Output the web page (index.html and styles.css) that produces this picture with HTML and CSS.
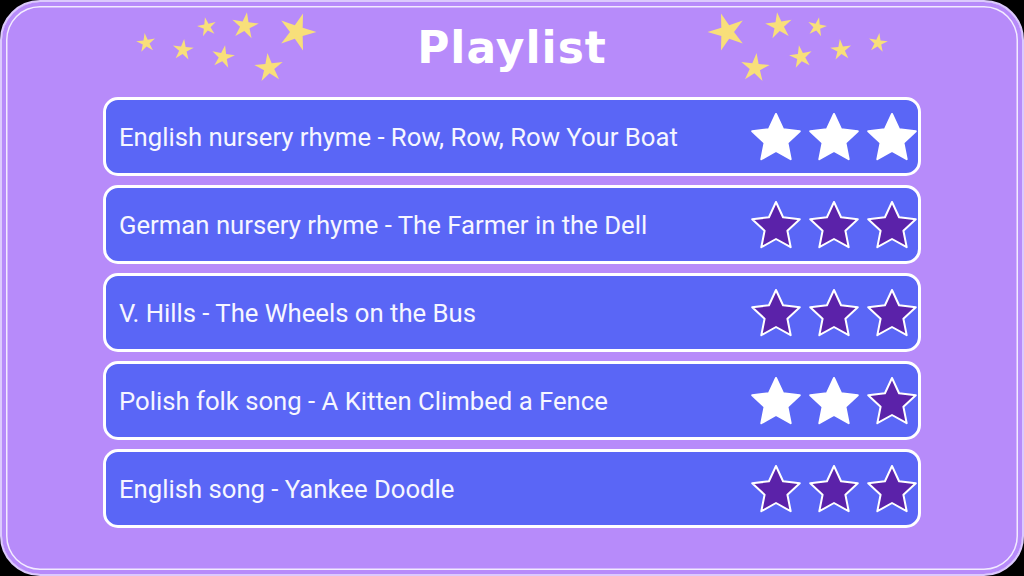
FILE: index.html
```html
<!DOCTYPE html>
<html lang="en">
<head>
  <meta charset="UTF-8" />
  <meta name="viewport" content="width=device-width, initial-scale=1" />
  <title>Playlist</title>
  <link rel="stylesheet" href="styles.css">
</head>
<body>
  <svg class="defs" width="0" height="0">
    <defs>
      <path id="sparkle" d="M0,-10 L2.12,-2.92 L9.51,-3.09 L3.42,1.11 L5.88,8.09 L0,3.6 L-5.88,8.09 L-3.42,1.11 L-9.51,-3.09 L-2.12,-2.92 Z" />
      <path id="rate-star" d="M25,0 L32.05,15.29 L48.78,17.27 L36.41,28.71 L39.69,45.23 L25,37 L10.31,45.23 L13.59,28.71 L1.22,17.27 L17.95,15.29 Z" />
    </defs>
  </svg>

  <div class="panel">
    <header class="header">
      <svg class="sparkles" width="190" height="90" viewBox="0 0 190 90">
        <g id="sparkle-group">
          <use href="#sparkle" transform="translate(16,38) rotate(-8) scale(1)" />
          <use href="#sparkle" transform="translate(53,45) rotate(6) scale(1.1)" />
          <use href="#sparkle" transform="translate(77,22) rotate(-12) scale(1)" />
          <use href="#sparkle" transform="translate(93,52) rotate(10) scale(1.2)" />
          <use href="#sparkle" transform="translate(115,21) rotate(8) scale(1.4)" />
          <use href="#sparkle" transform="translate(139,63) rotate(-6) scale(1.5)" />
          <use href="#sparkle" transform="translate(167,27) rotate(18) scale(1.95)" />
        </g>
      </svg>
      <h1 class="title">Playlist</h1>
      <svg class="sparkles" width="190" height="90" viewBox="0 0 190 90">
        <use href="#sparkle-group" transform="translate(190,0) scale(-1,1)" />
      </svg>
    </header>

    <div class="list" id="song-list"></div>
  </div>

  <script>
    const songs = [
      { title: "English nursery rhyme - Row, Row, Row Your Boat", stars: 3 },
      { title: "German nursery rhyme - The Farmer in the Dell", stars: 0 },
      { title: "V. Hills - The Wheels on the Bus", stars: 0 },
      { title: "Polish folk song - A Kitten Climbed a Fence", stars: 2 },
      { title: "English song - Yankee Doodle", stars: 0 }
    ];

    const list = document.getElementById("song-list");

    songs.forEach(song => {
      const row = document.createElement("div");
      row.className = "song";

      let stars = "";
      for (let i = 0; i < 3; i++) {
        const cls = i < song.stars ? "star earned" : "star";
        stars += `<svg class="${cls}" width="50" height="48" viewBox="0 -1 50 48"><use href="#rate-star" /></svg>`;
      }

      row.innerHTML = `
        <div class="song-title">${song.title}</div>
        <div class="stars">${stars}</div>
      `;
      list.appendChild(row);
    });
  </script>
</body>
</html>
```

FILE: styles.css
```css
body {
  margin: 0;
  background: #000;
  font-family: Roboto, "Liberation Sans", sans-serif;
}

.defs {
  position: absolute;
}

.panel {
  width: 1024px;
  height: 576px;
  box-sizing: border-box;
  border: 2px solid #dccafd;
  border-radius: 40px;
  background: #b78bfa;
  box-shadow: inset 0 0 0 4px #b78bfa, inset 0 0 0 5.5px #f2eaff;
}

.header {
  height: 95px;
  display: flex;
  align-items: flex-start;
  justify-content: center;
  gap: 97px;
}

.sparkles {
  margin-top: 3px;
  fill: #f8df7a;
}

.title {
  margin: 0;
  padding-top: 20px;
  font-family: "DejaVu Sans", sans-serif;
  font-weight: bold;
  font-size: 44px;
  line-height: 52px;
  letter-spacing: 1px;
  color: #fff;
}

.list {
  display: flex;
  flex-direction: column;
  align-items: center;
  gap: 9px;
}

.song {
  width: 818px;
  height: 79px;
  box-sizing: border-box;
  border: 3px solid #fff;
  border-radius: 15px;
  background: #5a66f6;
  display: flex;
  align-items: center;
  justify-content: space-between;
  padding: 0 0 0 13px;
}

.song-title {
  font-size: 25.7px;
  color: #f6f6ff;
  padding-top: 1px;
}

.stars {
  display: flex;
  gap: 8px;
  padding-top: 1px;
  margin-right: 1px;
}

.star {
  fill: #5b22a9;
  stroke: #fff;
  stroke-width: 2;
  stroke-linejoin: round;
}

.star.earned {
  fill: #fff;
}
```
